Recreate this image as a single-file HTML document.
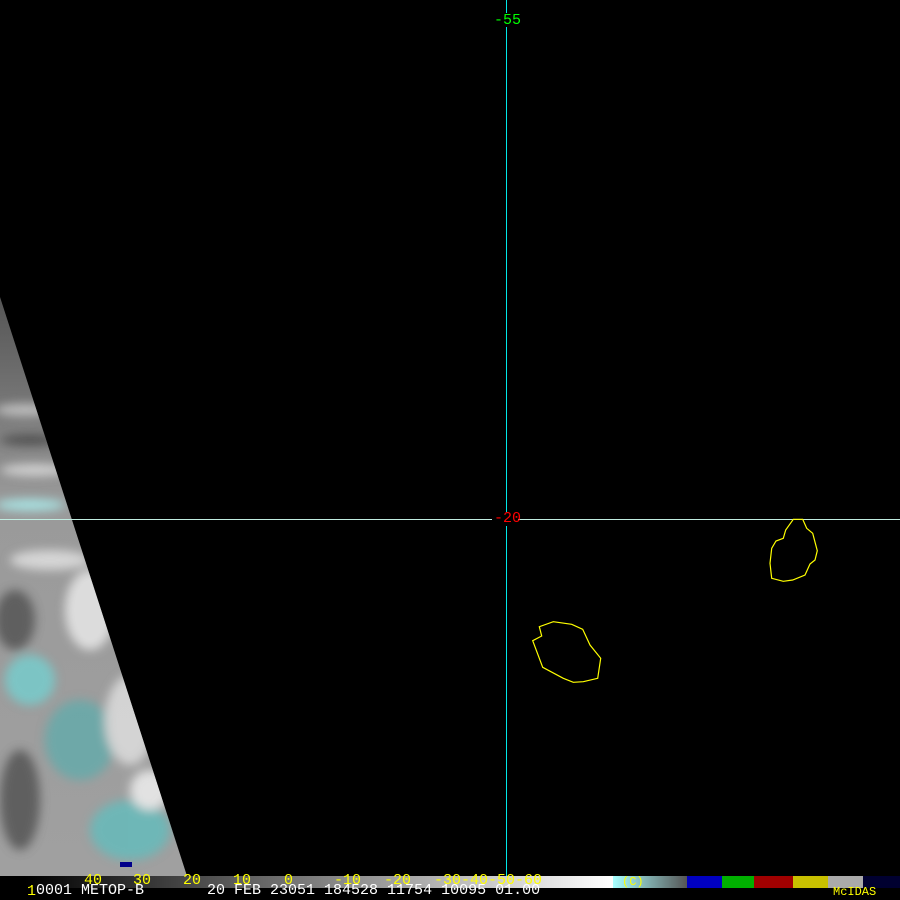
<!DOCTYPE html>
<html><head><style>
html,body{margin:0;padding:0;background:#000;width:900px;height:900px;overflow:hidden;position:relative}
.t{position:absolute;font-family:"Liberation Mono",monospace;font-size:15px;line-height:12px;white-space:pre}
</style></head><body>
<svg width="900" height="900" style="position:absolute;left:0;top:0">
<defs>
<clipPath id="w"><polygon points="0,297 0,876 187,876"/></clipPath>
<linearGradient id="g" x1="0" y1="0" x2="0" y2="1">
<stop offset="0" stop-color="#555"/><stop offset="0.15" stop-color="#707070"/><stop offset="0.35" stop-color="#9a9a9a"/><stop offset="1" stop-color="#a0a0a0"/></linearGradient>
<filter id="b" x="-50%" y="-50%" width="200%" height="200%"><feGaussianBlur stdDeviation="5"/></filter>
<linearGradient id="gb" x1="0" x2="1"><stop offset="0" stop-color="#000"/><stop offset="0.04" stop-color="#000"/><stop offset="1" stop-color="#fff"/></linearGradient>
<linearGradient id="cb" x1="0" x2="1"><stop offset="0" stop-color="#a8ffff"/><stop offset="1" stop-color="#555"/></linearGradient>
</defs>
<g clip-path="url(#w)">
<rect x="0" y="297" width="190" height="580" fill="url(#g)"/>
<g filter="url(#b)" opacity="0.85">
<ellipse cx="25" cy="410" rx="30" ry="6" fill="#ccc"/>
<ellipse cx="30" cy="440" rx="30" ry="5" fill="#444"/>
<ellipse cx="35" cy="470" rx="35" ry="6" fill="#ddd"/>
<ellipse cx="30" cy="505" rx="35" ry="6" fill="#aee"/>
<ellipse cx="50" cy="560" rx="40" ry="10" fill="#e0e0e0"/>
<ellipse cx="15" cy="620" rx="20" ry="30" fill="#555"/>
<ellipse cx="90" cy="610" rx="25" ry="40" fill="#e8e8e8"/>
<ellipse cx="30" cy="680" rx="25" ry="25" fill="#7cc"/>
<ellipse cx="80" cy="740" rx="35" ry="40" fill="#6aa"/>
<ellipse cx="130" cy="830" rx="40" ry="30" fill="#6bb"/>
<ellipse cx="20" cy="800" rx="20" ry="50" fill="#555"/>
<ellipse cx="130" cy="720" rx="25" ry="45" fill="#ddd"/>
<ellipse cx="150" cy="790" rx="20" ry="20" fill="#eee"/>
</g>
<rect x="120" y="862" width="12" height="5" fill="#00008a"/>
</g>
<line x1="506.5" y1="0" x2="506.5" y2="888" stroke="#00e8e8" stroke-width="1"/>
<line x1="0" y1="519.5" x2="900" y2="519.5" stroke="#c0ece0" stroke-width="1"/>
<rect x="492" y="13" width="26" height="14" fill="#000"/>
<rect x="492" y="512" width="26" height="14" fill="#000"/>
<g fill="none" stroke="#ffff00" stroke-width="1.2">
<polygon points="793.3,519.3 802.7,519.3 806.7,528.3 812.7,533.3 817.3,550.7 815,560 810,564 805,575 792.7,580 783.3,581.3 771.7,578.3 770,563.3 771.7,548.3 776,541 783.3,538.3 785.7,530"/>
<polygon points="553.3,621.7 571.7,624.3 582.7,629.3 590,645 600.7,658.3 597.7,678.3 583.3,681.7 573.3,682.3 563.3,678.3 542.7,667.3 532.7,640.7 541.7,636 539.3,626.7"/>
</g>
<rect x="0" y="876" width="613" height="12" fill="url(#gb)"/>
<rect x="613" y="876" width="74" height="12" fill="url(#cb)"/>
<rect x="687" y="876" width="35" height="12" fill="#0000c0"/>
<rect x="722" y="876" width="32" height="12" fill="#00b000"/>
<rect x="754" y="876" width="39" height="12" fill="#a00000"/>
<rect x="793" y="876" width="35" height="12" fill="#c8c000"/>
<rect x="828" y="876" width="35" height="12" fill="#aaa"/>
<rect x="863" y="876" width="37" height="12" fill="#000030"/>
</svg>
<div class="t" style="left:494px;top:15px;color:#00ff00">-55</div>
<div class="t" style="left:494px;top:513px;color:#ff0000">-20</div>
<div class="t" style="left:84px;top:875px;color:#ffff00">40</div>
<div class="t" style="left:133px;top:875px;color:#ffff00">30</div>
<div class="t" style="left:183px;top:875px;color:#ffff00">20</div>
<div class="t" style="left:233px;top:875px;color:#ffff00">10</div>
<div class="t" style="left:284px;top:875px;color:#ffff00">0</div>
<div class="t" style="left:334px;top:875px;color:#ffff00">-10</div>
<div class="t" style="left:384px;top:875px;color:#ffff00">-20</div>
<div class="t" style="left:434px;top:875px;color:#ffff00">-30-40-50-60</div>
<div class="t" style="left:622px;top:876px;color:#ffff00;font-size:12px">(C)</div>
<div class="t" style="left:27px;top:886px;color:#ffff00">1</div>
<div class="t" style="left:36px;top:885px;color:#fff">0001 METOP-B       20 FEB 23051 184528 11754 10095 01.00</div>
<div class="t" style="left:833px;top:886px;color:#ffff00;font-size:12px">McIDAS</div>
</body></html>
